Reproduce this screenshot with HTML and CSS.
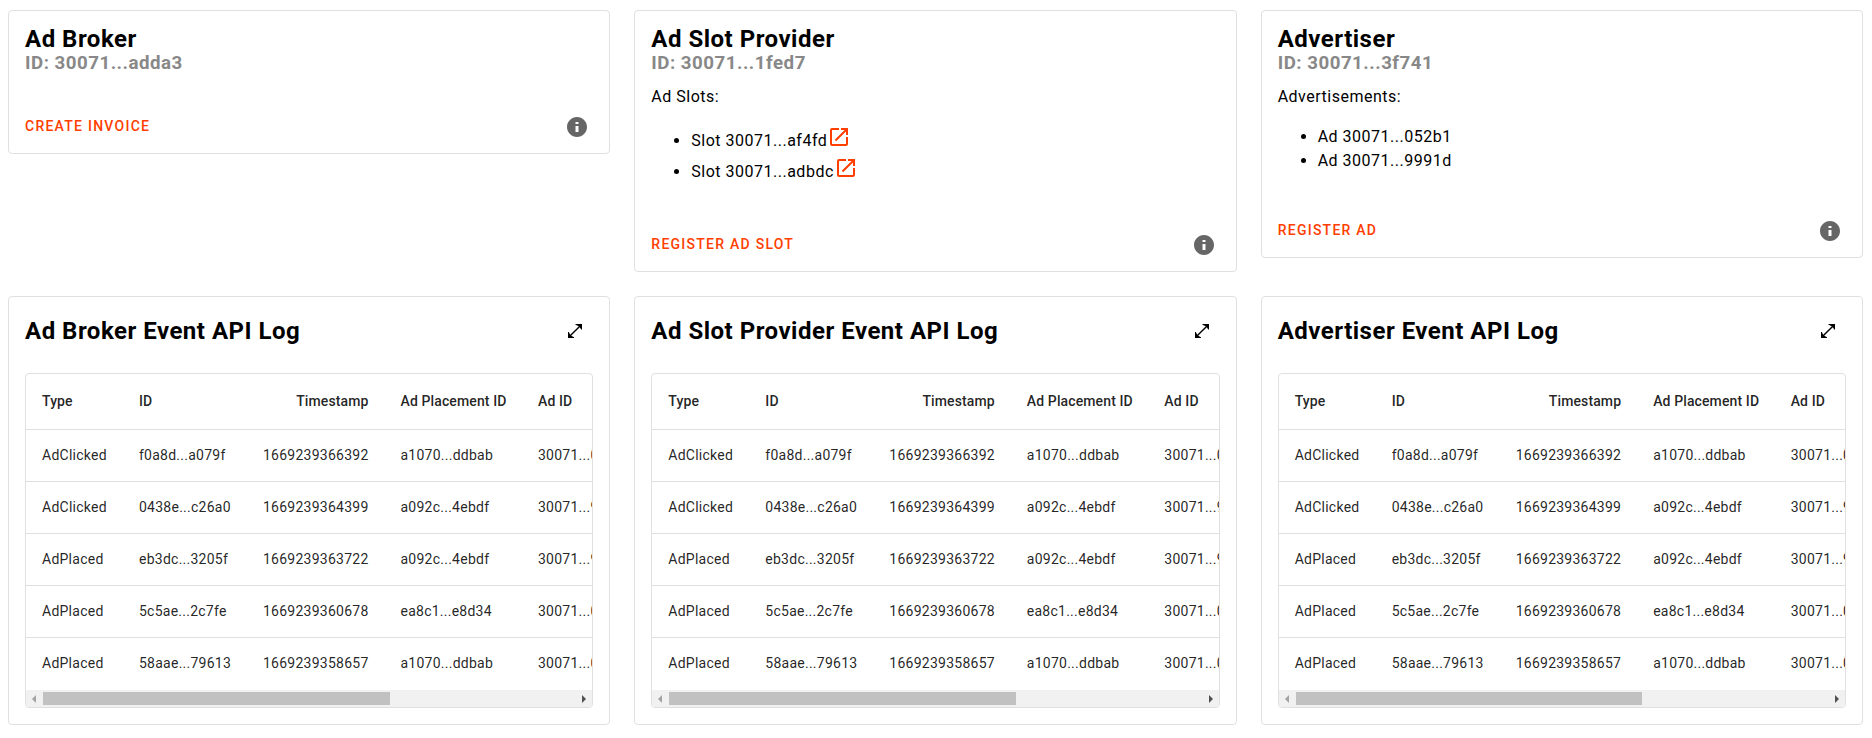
FILE: index.html
```
<!DOCTYPE html>
<html lang="en">
<head>
<meta charset="utf-8">
<title>Ad Broker</title>
<link rel="stylesheet" href="styles.css">
</head>
<body>
<svg class="defs" width="0" height="0" aria-hidden="true">
  <symbol id="info" viewBox="0 0 24 24"><path d="M12 2C6.480 2 2 6.480 2 12s4.480 10 10 10 10-4.480 10-10S17.520 2 12 2zm1.500 15h-3v-6h3v6zm0-8h-3V7h3v2z"/></symbol>
  <symbol id="open" viewBox="0 0 24 24"><path d="M19 19H5V5h7V3H5a2 2 0 0 0-2 2v14a2 2 0 0 0 2 2h14c1.100 0 2-.9 2-2v-7h-2v7zM14 3v2h3.590l-9.830 9.830 1.410 1.410L19 6.410V10h2V3h-7z"/></symbol>
  <symbol id="expand" viewBox="0 0 14 14"><path d="M7.500 0H14v5.500h-.8L11.800 3.200 3.200 11.800 6 13.300V14H0V8h.8L2.200 10.800 10.800 2.200 7.500.8z"/></symbol>
</svg>
<main class="grid">
  <section class="card">
    <div class="content">
      <header class="heading"><h2 class="title">Ad Broker</h2><h3 class="subtitle">ID: 30071...adda3</h3></header>
    </div>
    <footer class="actions"><button class="button">Create invoice</button><svg class="info"><use href="#info"/></svg></footer>
  </section>
  <section class="card">
    <div class="content">
      <header class="heading"><h2 class="title">Ad Slot Provider</h2><h3 class="subtitle">ID: 30071...1fed7</h3></header>
      <div>Ad Slots:</div>
      <ul class="list slots">
        <li>Slot 30071...af4fd<svg class="open"><use href="#open"/></svg></li>
        <li>Slot 30071...adbdc<svg class="open"><use href="#open"/></svg></li>
      </ul>
    </div>
    <footer class="actions"><button class="button">Register ad slot</button><svg class="info"><use href="#info"/></svg></footer>
  </section>
  <section class="card">
    <div class="content">
      <header class="heading"><h2 class="title">Advertiser</h2><h3 class="subtitle">ID: 30071...3f741</h3></header>
      <div>Advertisements:</div>
      <ul class="list">
        <li>Ad 30071...052b1</li>
        <li>Ad 30071...9991d</li>
      </ul>
    </div>
    <footer class="actions"><button class="button">Register ad</button><svg class="info"><use href="#info"/></svg></footer>
  </section>
  <section class="card log" data-title="Ad Broker Event API Log"></section>
  <section class="card log" data-title="Ad Slot Provider Event API Log"></section>
  <section class="card log" data-title="Advertiser Event API Log"></section>
</main>
<script src="app.js"></script>
</body>
</html>
```

FILE: app.js
```
const events = [
  ["AdClicked", "f0a8d...a079f", "1669239366392", "a1070...ddbab", "30071...052b1"],
  ["AdClicked", "0438e...c26a0", "1669239364399", "a092c...4ebdf", "30071...9991d"],
  ["AdPlaced", "eb3dc...3205f", "1669239363722", "a092c...4ebdf", "30071...9991d"],
  ["AdPlaced", "5c5ae...2c7fe", "1669239360678", "ea8c1...e8d34", "30071...052b1"],
  ["AdPlaced", "58aae...79613", "1669239358657", "a1070...ddbab", "30071...052b1"]
];
const headings = ["Type", "ID", "Timestamp", "Ad Placement ID", "Ad ID"];
const row = (cells, tag) => "<tr>" + cells.map(c => `<${tag}>${c}</${tag}>`).join("") + "</tr>";

document.querySelectorAll(".log").forEach(card => {
  card.innerHTML = `
    <header class="log-header">
      <h2 class="title">${card.dataset.title}</h2>
      <svg class="expand"><use href="#expand"/></svg>
    </header>
    <div class="table-box">
      <div class="viewport">
        <table class="table">
          <colgroup><col class="c-type"><col class="c-id"><col class="c-time"><col class="c-place"><col class="c-ad"></colgroup>
          <thead>${row(headings, "th")}</thead>
          <tbody>${events.map(e => row(e, "td")).join("")}</tbody>
        </table>
      </div>
      <div class="scrollbar"><i class="arrow left"></i><i class="thumb"></i><i class="arrow right"></i></div>
    </div>`;
});
```

FILE: styles.css
```
* { box-sizing: border-box; }
body {
  margin: 0;
  background: #fff;
  color: #000;
  font: 400 16px/24px Roboto, sans-serif;
  letter-spacing: .5px;
  overflow: hidden;
}
.defs { display: block; }
.grid {
  display: grid;
  grid-template-columns: repeat(3, minmax(0, 1fr));
  gap: 24px;
  align-items: start;
  width: 1871px;
  padding: 10px 8px;
}
.card {
  background: #fff;
  border: 1px solid #e0e0e0;
  border-radius: 4px;
}
.content { padding: 16px; }
.heading { padding-bottom: 10px; }
.title, .subtitle { margin: 0; line-height: 24px; }
.title { font-size: 24px; font-weight: 700; }
.subtitle { font-size: 18.72px; font-weight: 700; color: #888; }
.list { margin: 16px 0; padding-left: 40px; }
.slots li { line-height: 31px; height: 31px; }
.open { width: 24px; height: 24px; fill: #ff3e00; vertical-align: -3px; }
.actions {
  display: flex;
  align-items: center;
  justify-content: space-between;
  height: 52px;
  padding: 8px 20px 8px 16px;
}
.button {
  padding: 0 0 2px;
  border: 0;
  background: none;
  color: #ff3e00;
  font: 500 14px/34px Roboto, sans-serif;
  letter-spacing: 1.25px;
  text-transform: uppercase;
}
.info { width: 24px; height: 24px; fill: #666; }
.log { padding: 16px; }
.log-header {
  display: flex;
  align-items: center;
  justify-content: space-between;
  height: 36px;
  margin-bottom: 24px;
  padding-right: 11px;
}
.expand { width: 14px; height: 14px; fill: #000; }
.table-box {
  border: 1px solid #e0e0e0;
  border-radius: 4px;
  overflow: hidden;
}
.viewport { overflow: hidden; }
.table {
  table-layout: fixed;
  width: 634px;
  border-collapse: separate;
  border-spacing: 0;
  font-size: 14px;
  line-height: 20px;
  letter-spacing: .25px;
  color: rgba(0, 0, 0, .87);
  white-space: nowrap;
}
.c-type { width: 97px; }
.c-id { width: 124px; }
.c-time { width: 137.500px; }
.c-place { width: 137.500px; }
.c-ad { width: 138px; }
.table th, .table td {
  height: 52px;
  padding: 0 16px 2px;
  border-bottom: 1px solid #e0e0e0;
  text-align: left;
  font-weight: 400;
}
.table th { height: 56px; font-weight: 500; letter-spacing: .12px; }
.table th:nth-child(3), .table td:nth-child(3) { text-align: right; }
.table tbody tr:last-child td { border-bottom: 0; }
.scrollbar {
  display: flex;
  align-items: center;
  height: 17px;
  background: #f1f1f1;
}
.thumb { width: 346.500px; height: 13px; margin: 0 auto 0 7px; background: #c1c1c1; }
.arrow { width: 0; height: 0; border: 4px solid transparent; }
.left { margin-left: 6px; border-left: 0; border-right-color: #a3a3a3; }
.right { margin-right: 6px; border-right: 0; border-left-color: #505050; }
```
